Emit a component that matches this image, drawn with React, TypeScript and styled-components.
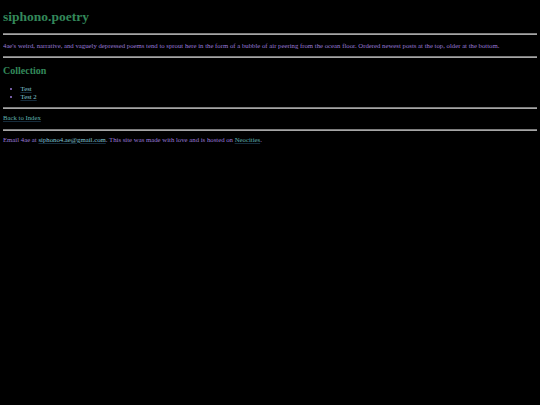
import React from "react";
import styled, {createGlobalStyle} from "styled-components";

const GlobalStyle = createGlobalStyle`
    html, body {
        background: #000;
    }
    body {
        margin: 0 3px;
        font-family: "Liberation Serif", "Times New Roman", serif;
        font-size: 6.75px;
        color: #9a7ad8;
    }
`;

const Page = styled.div`
    display: flex;
    flex-direction: column;
`;

const Title = styled.h1`
    margin: 9px 0 9px;
    font-size: 13.5px;
    line-height: 15px;
    font-weight: bold;
    color: #33885a;
`;

const Rule = styled.hr`
    margin: 0;
    height: 0;
    border: none;
    border-top: 1px solid #7c7c7c;
    border-bottom: 1px solid #a6a6a6;
`;

const Text = styled.p<{$before?: number; $after?: number}>`
    margin: ${props => props.$before ?? 6.2}px 0 ${props => props.$after ?? 5.5}px;
    line-height: 8px;
`;

const Heading = styled.h2`
    margin: 7.4px 0 7.9px;
    font-size: 10px;
    line-height: 12px;
    font-weight: bold;
    color: #33885a;
`;

const List = styled.ul`
    margin: 0 0 6.2px;
    padding-left: 17.5px;
    line-height: 7.7px;
    list-style: disc;
`;

const Link = styled.a<{$bright?: boolean}>`
    color: ${props => props.$bright ? "#80c4d4" : "#5fb0b0"};
    text-decoration: underline;
    text-decoration-thickness: 0.5px;
    text-decoration-color: rgba(40, 80, 110, 0.55);
`;

const posts = ["Test", "Test 2"];

export default function App() {
    return (
        <Page>
            <GlobalStyle />
            <Title>siphono.poetry</Title>
            <Rule />
            <Text $before={7.2}>
                4ae's weird, narrative, and vaguely depressed poems tend to sprout here in the form of a bubble of
                air peering from the ocean floor. Ordered newest posts at the top, older at the bottom.
            </Text>
            <Rule />
            <Heading>Collection</Heading>
            <List>
                {posts.map(post => (
                    <li key={post}>
                        <Link href="#" $bright>{post}</Link>
                    </li>
                ))}
            </List>
            <Rule />
            <Text $before={5.4} $after={6.6}>
                <Link href="#">Back to Index</Link>
            </Text>
            <Rule />
            <Text $before={5.4}>
                Email 4ae at <Link href="#" $bright>siphono4.ae@gmail.com</Link>. This site was made with love and is
                hosted on <Link href="#">Neocities</Link>.
            </Text>
        </Page>
    );
}
